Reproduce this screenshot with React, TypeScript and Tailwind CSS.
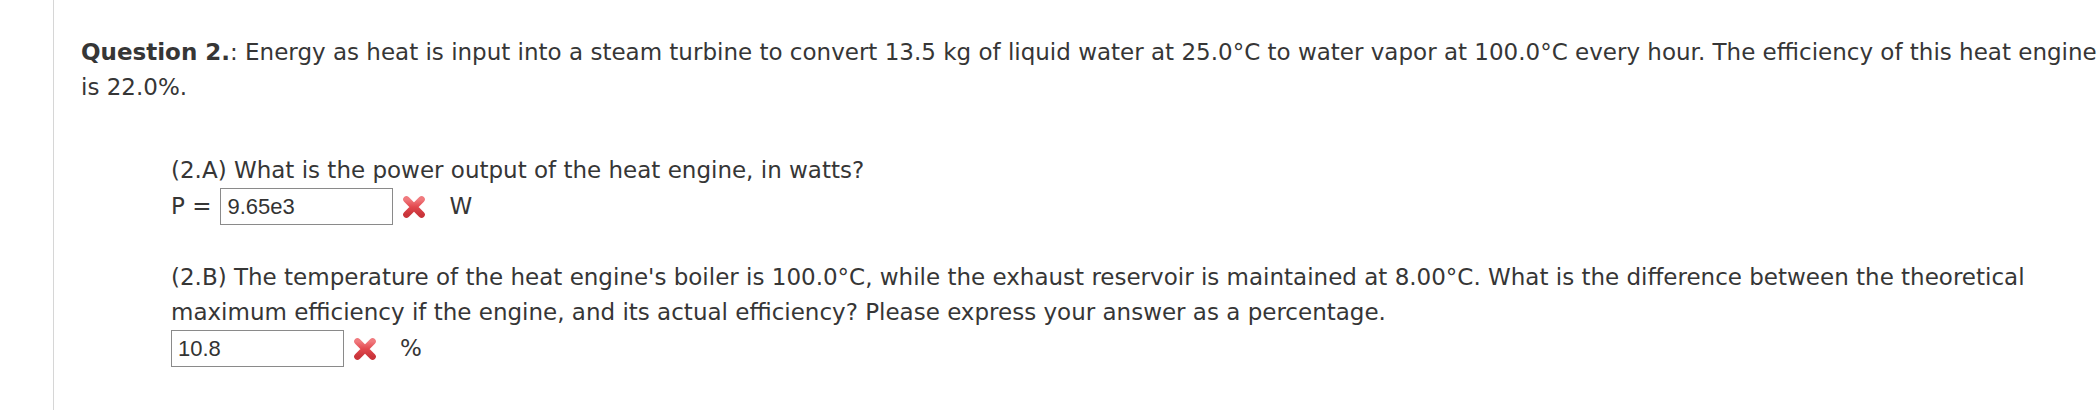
import React from "react";

function WrongMark() {
  return (
    <svg width="26" height="26" viewBox="0 0 24 24" className="shrink-0">
      <defs>
        <linearGradient id="xg" x1="0" y1="0" x2="0" y2="1">
          <stop offset="0" stopColor="#f07a7e" />
          <stop offset="0.5" stopColor="#e2474d" />
          <stop offset="1" stopColor="#c9343a" />
        </linearGradient>
      </defs>
      <path d="M5 5 L19 19 M19 5 L5 19" stroke="url(#xg)" strokeWidth="6" strokeLinecap="round" />
    </svg>
  );
}

function AnswerBox({ value }: { value: string }) {
  return (
    <div className="w-[173px] h-[37px] border border-[#8a8a8a] bg-white px-[6px] flex items-center text-[22px] text-[#333] font-['Liberation_Sans',Arial,sans-serif]">
      {value}
    </div>
  );
}

export default function App() {
  return (
    <div className="h-[410px] w-full bg-white pl-[53px] font-['DejaVu_Sans',Verdana,sans-serif] text-[23px] leading-[35px] text-[#363636]">
      <div className="h-full border-l border-[#d6d6d6] pl-[27px] pt-[35px]">
        <p className="whitespace-nowrap">
          <b>Question 2.</b>: Energy as heat is input into a steam turbine to convert 13.5 kg of liquid water at 25.0°C to
          water vapor at 100.0°C every hour. The efficiency of this heat engine
          <br />
          is 22.0%.
        </p>

        <div className="pl-[90px] pt-[48px] whitespace-nowrap">
          <p>(2.A) What is the power output of the heat engine, in watts?</p>
          <div className="flex items-center h-[37px]">
            <span className="mr-[9px]">P =</span>
            <AnswerBox value="9.65e3" />
            <span className="ml-[8px]">
              <WrongMark />
            </span>
            <span className="ml-[22px]">W</span>
          </div>

          <p className="pt-[35px]">
            (2.B) The temperature of the heat engine's boiler is 100.0°C, while the exhaust reservoir is maintained at
            8.00°C. What is the difference between the theoretical
            <br />
            maximum efficiency if the engine, and its actual efficiency? Please express your answer as a percentage.
          </p>
          <div className="flex items-center h-[37px]">
            <AnswerBox value="10.8" />
            <span className="ml-[8px]">
              <WrongMark />
            </span>
            <span className="ml-[22px]">%</span>
          </div>
        </div>
      </div>
    </div>
  );
}
